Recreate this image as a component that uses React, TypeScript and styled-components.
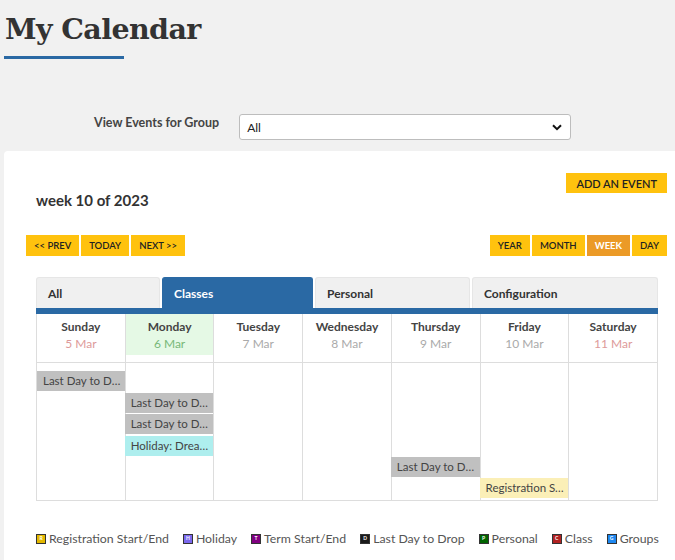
import React from "react";
import styled, { createGlobalStyle } from "styled-components";

const GlobalStyle = createGlobalStyle`
  html, body { margin: 0; padding: 0; background: #f1f1f1; }
  body { font-family: Lato, "Open Sans", sans-serif; color: #333; }
  * { box-sizing: border-box; }
`;

const Page = styled.div`
  width: 675px;
  height: 560px;
  overflow: hidden;
  background: #f1f1f1;
`;

const Header = styled.header`
  padding: 9px 0 0 4px;
`;

const Title = styled.h1`
  margin: 0;
  padding-left: 1px;
  font-family: "DejaVu Serif", "Liberation Serif", serif;
  font-weight: 700;
  font-size: 28.5px;
  line-height: 40px;
  letter-spacing: -0.6px;
  color: #333;
`;

const TitleRule = styled.div`
  width: 120px;
  height: 3px;
  margin-top: 7px;
  background: #2a69a4;
`;

const FilterRow = styled.div`
  display: flex;
  align-items: flex-start;
  gap: 20px;
  padding: 56px 0 0 94px;
`;

const FilterLabel = styled.label`
  font-size: 12.5px;
  font-weight: 700;
  color: #444;
  line-height: 16px;
`;

const Select = styled.div`
  width: 332px;
  height: 26px;
  margin-top: -1px;
  display: flex;
  align-items: center;
  justify-content: space-between;
  padding: 0 8px 0 7px;
  background: #fff;
  border: 1px solid #bdbdbd;
  border-radius: 3px;
  font-size: 12px;
  color: #222;
`;

const Card = styled.section`
  margin: 11px 0 0 4px;
  background: #fff;
  border-top-left-radius: 4px;
  padding: 22px 8px 0 22px;
  height: 420px;
`;

const TopRow = styled.div`
  display: flex;
  justify-content: space-between;
  align-items: flex-start;
`;

const WeekHeading = styled.h2`
  margin: 0;
  padding: 18px 0 0 10px;
  font-size: 15px;
  font-weight: 700;
  line-height: 18px;
  color: #333;
`;

const Toolbar = styled.div`
  display: flex;
  justify-content: space-between;
  margin-top: 26px;
`;

const ButtonGroup = styled.div`
  display: flex;
  gap: 2px;
`;

const YellowButton = styled.button<{ $active?: boolean; $big?: boolean }>`
  height: ${(p) => (p.$big ? 20 : 21)}px;
  padding: 0 ${(p) => (p.$big ? 10 : 8)}px;
  border: none;
  border-radius: 0;
  background: ${(p) => (p.$active ? "#eb9a27" : "#ffc20e")};
  color: ${(p) => (p.$active ? "#fff" : "#222")};
  font-family: Lato, "Open Sans", sans-serif;
  font-size: ${(p) => (p.$big ? 11 : 9.5)}px;
  font-weight: ${(p) => (p.$active ? 700 : 600)};
  text-transform: uppercase;
  cursor: pointer;
`;

const Calendar = styled.div`
  width: 622px;
  margin: 21px 0 0 10px;
`;

const Tabs = styled.div`
  display: grid;
  grid-template-columns: 124px 151px 155px 186px;
  gap: 2px;
  border-bottom: 6px solid #2a69a4;
`;

const Tab = styled.div<{ $active?: boolean }>`
  height: 31px;
  display: flex;
  align-items: center;
  padding-left: 11px;
  border-radius: 3px 3px 0 0;
  background: ${(p) => (p.$active ? "#2a69a4" : "#f0f0f0")};
  border: 1px solid ${(p) => (p.$active ? "#2a69a4" : "#e6e6e6")};
  border-bottom: none;
  color: ${(p) => (p.$active ? "#fff" : "#333")};
  font-size: 12px;
  font-weight: 700;
`;

const WeekBox = styled.div`
  border-right: 1px solid #ddd;
  border-bottom: 1px solid #ddd;
`;

const DayHeaderRow = styled.div`
  display: grid;
  grid-template-columns: repeat(7, 1fr);
  border-bottom: 1px solid #ddd;
`;

const DayHeaderCell = styled.div`
  border-left: 1px solid #ddd;
  padding-bottom: 7px;
`;

const DayHeaderInner = styled.div<{ $today?: boolean }>`
  height: 41px;
  padding-top: 4px;
  text-align: center;
  background: ${(p) => (p.$today ? "#e5f9e5" : "transparent")};
`;

const DayName = styled.div`
  font-size: 12px;
  font-weight: 700;
  line-height: 17px;
  color: #444;
`;

const DayDate = styled.div<{ $tone: "normal" | "weekend" | "today" }>`
  font-size: 12px;
  line-height: 17px;
  color: ${(p) =>
    p.$tone === "weekend" ? "#dd9a9a" : p.$tone === "today" ? "#78b878" : "#aaa"};
`;

const EventGrid = styled.div`
  display: grid;
  grid-template-columns: repeat(7, 1fr);
  grid-template-rows: 7px repeat(6, 20px) 0px;
  row-gap: 1.4px;
`;

const DayColumn = styled.div<{ $col: number }>`
  grid-column: ${(p) => p.$col};
  grid-row: 1 / -1;
  border-left: 1px solid #ddd;
`;

const EventChip = styled.div<{ $col: number; $row: number; $kind: "drop" | "holiday" | "reg" }>`
  grid-column: ${(p) => p.$col};
  grid-row: ${(p) => p.$row + 1};
  margin-left: ${(p) => (p.$col === 1 ? 1 : 0)}px;
  z-index: 1;
  min-width: 0;
  padding: 0 3px 0 6px;
  background: ${(p) =>
    p.$kind === "holiday" ? "#aeeeee" : p.$kind === "reg" ? "#fbefb7" : "#c0c0c0"};
  color: #444;
  font-size: 11.5px;
  line-height: 20px;
  white-space: nowrap;
  overflow: hidden;
  text-overflow: ellipsis;
`;

const Legend = styled.ul`
  list-style: none;
  margin: 30px 0 0 10px;
  padding: 0;
  display: flex;
  gap: 14px;
`;

const LegendItem = styled.li`
  display: flex;
  align-items: center;
  gap: 3px;
  font-size: 12.3px;
  color: #555;
  line-height: 16px;
`;

const Swatch = styled.span<{ $bg: string }>`
  width: 10px;
  height: 10px;
  display: inline-flex;
  align-items: center;
  justify-content: center;
  background: ${(p) => p.$bg};
  border: 1px solid #333;
  color: #fff;
  font-size: 5px;
  font-weight: 700;
  line-height: 1;
`;

const days = [
  { name: "Sunday", date: "5 Mar", tone: "weekend" as const },
  { name: "Monday", date: "6 Mar", tone: "today" as const },
  { name: "Tuesday", date: "7 Mar", tone: "normal" as const },
  { name: "Wednesday", date: "8 Mar", tone: "normal" as const },
  { name: "Thursday", date: "9 Mar", tone: "normal" as const },
  { name: "Friday", date: "10 Mar", tone: "normal" as const },
  { name: "Saturday", date: "11 Mar", tone: "weekend" as const },
];

const events = [
  { col: 1, row: 1, kind: "drop" as const, text: "Last Day to Drop" },
  { col: 2, row: 2, kind: "drop" as const, text: "Last Day to Drop" },
  { col: 2, row: 3, kind: "drop" as const, text: "Last Day to Drop" },
  { col: 2, row: 4, kind: "holiday" as const, text: "Holiday: Dreams Day" },
  { col: 5, row: 5, kind: "drop" as const, text: "Last Day to Drop" },
  { col: 6, row: 6, kind: "reg" as const, text: "Registration Start" },
];

const legend = [
  { label: "Registration Start/End", color: "#e3b800", letter: "R" },
  { label: "Holiday", color: "#7b68ee", letter: "H" },
  { label: "Term Start/End", color: "#800080", letter: "T" },
  { label: "Last Day to Drop", color: "#1a1a1a", letter: "D" },
  { label: "Personal", color: "#006400", letter: "P" },
  { label: "Class", color: "#b22222", letter: "C" },
  { label: "Groups", color: "#1e88f0", letter: "G" },
];

const Chevron = () => (
  <svg width="10" height="7" viewBox="0 0 10 7">
    <path d="M1 1.2 L5 5.2 L9 1.2" fill="none" stroke="#111" strokeWidth="2" />
  </svg>
);

export default function App() {
  return (
    <Page>
      <GlobalStyle />
      <Header>
        <Title>My Calendar</Title>
        <TitleRule />
      </Header>
      <FilterRow>
        <FilterLabel>View Events for Group</FilterLabel>
        <Select>
          <span>All</span>
          <Chevron />
        </Select>
      </FilterRow>
      <Card>
        <TopRow>
          <WeekHeading>week 10 of 2023</WeekHeading>
          <YellowButton $big>Add an Event</YellowButton>
        </TopRow>
        <Toolbar>
          <ButtonGroup>
            <YellowButton>&lt;&lt; Prev</YellowButton>
            <YellowButton>Today</YellowButton>
            <YellowButton>Next &gt;&gt;</YellowButton>
          </ButtonGroup>
          <ButtonGroup>
            <YellowButton>Year</YellowButton>
            <YellowButton>Month</YellowButton>
            <YellowButton $active>Week</YellowButton>
            <YellowButton>Day</YellowButton>
          </ButtonGroup>
        </Toolbar>
        <Calendar>
          <Tabs>
            <Tab>All</Tab>
            <Tab $active>Classes</Tab>
            <Tab>Personal</Tab>
            <Tab>Configuration</Tab>
          </Tabs>
          <WeekBox>
            <DayHeaderRow>
              {days.map((d) => (
                <DayHeaderCell key={d.name}>
                  <DayHeaderInner $today={d.tone === "today"}>
                    <DayName>{d.name}</DayName>
                    <DayDate $tone={d.tone}>{d.date}</DayDate>
                  </DayHeaderInner>
                </DayHeaderCell>
              ))}
            </DayHeaderRow>
            <EventGrid>
              {days.map((d, i) => (
                <DayColumn key={d.name} $col={i + 1} />
              ))}
              {events.map((e, i) => (
                <EventChip key={i} $col={e.col} $row={e.row} $kind={e.kind}>
                  {e.text}
                </EventChip>
              ))}
            </EventGrid>
          </WeekBox>
        </Calendar>
        <Legend>
          {legend.map((l) => (
            <LegendItem key={l.label}>
              <Swatch $bg={l.color}>{l.letter}</Swatch>
              {l.label}
            </LegendItem>
          ))}
        </Legend>
      </Card>
    </Page>
  );
}
